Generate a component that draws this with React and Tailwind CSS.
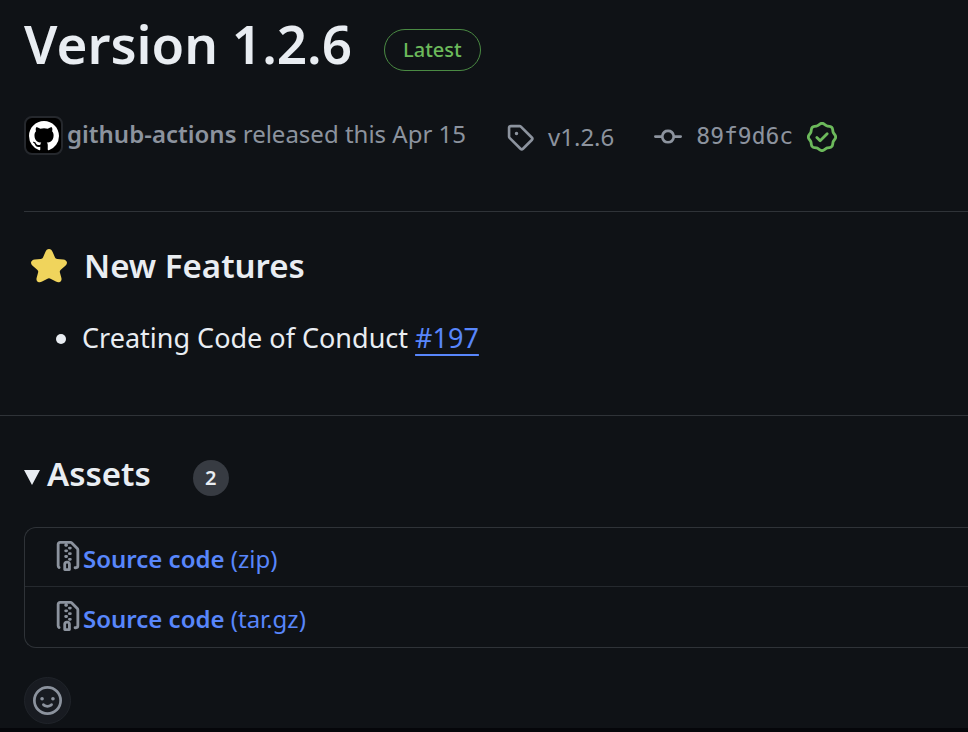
const ICONS = {
  github: "M8 0c4.42 0 8 3.58 8 8a8.013 8.013 0 0 1-5.45 7.59c-.4.08-.55-.17-.55-.38 0-.27.01-1.13.01-2.2 0-.75-.25-1.23-.54-1.48 1.78-.2 3.65-.88 3.65-3.95 0-.88-.31-1.59-.82-2.15.08-.2.36-1.02-.08-2.12 0 0-.67-.22-2.2.82-.64-.18-1.32-.27-2-.27-.68 0-1.36.09-2 .27-1.53-1.03-2.2-.82-2.2-.82-.44 1.1-.16 1.92-.08 2.12-.51.56-.82 1.28-.82 2.15 0 3.06 1.86 3.75 3.64 3.95-.23.2-.44.55-.51 1.07-.46.21-1.61.55-2.33-.66-.15-.24-.6-.83-1.23-.82-.67.01-.27.38.01.53.34.19.73.9.82 1.13.16.45.68 1.31 2.69.94 0 .67.01 1.3.01 1.49 0 .21-.15.45-.55.38A7.995 7.995 0 0 1 0 8c0-4.42 3.58-8 8-8Z",
  tag: "M1 7.775V2.75C1 1.784 1.784 1 2.75 1h5.025c.464 0 .91.184 1.238.513l6.25 6.25a1.75 1.75 0 0 1 0 2.474l-5.026 5.026a1.75 1.75 0 0 1-2.474 0l-6.25-6.25A1.752 1.752 0 0 1 1 7.775Zm1.5 0c0 .066.026.13.073.177l6.25 6.25a.25.25 0 0 0 .354 0l5.025-5.025a.25.25 0 0 0 0-.354l-6.25-6.25a.25.25 0 0 0-.177-.073H2.75a.25.25 0 0 0-.25.25ZM6 5a1 1 0 1 1 0 2 1 1 0 0 1 0-2Z",
  commit: "M11.93 8.5a4.002 4.002 0 0 1-7.86 0H.75a.75.75 0 0 1 0-1.5h3.32a4.002 4.002 0 0 1 7.86 0h3.32a.75.75 0 0 1 0 1.5Zm-1.43-.75a2.5 2.5 0 1 0-5 0 2.5 2.5 0 0 0 5 0Z",
  verified: "m9.585.52.929.68c.153.112.331.186.518.215l1.138.175a2.678 2.678 0 0 1 2.24 2.24l.174 1.139c.029.187.103.365.215.518l.68.928a2.677 2.677 0 0 1 0 3.17l-.68.928a1.174 1.174 0 0 0-.215.518l-.175 1.138a2.678 2.678 0 0 1-2.241 2.241l-1.138.175a1.17 1.17 0 0 0-.518.215l-.928.68a2.677 2.677 0 0 1-3.17 0l-.928-.68a1.174 1.174 0 0 0-.518-.215L3.83 14.41a2.678 2.678 0 0 1-2.24-2.24l-.175-1.138a1.17 1.17 0 0 0-.215-.518l-.68-.928a2.677 2.677 0 0 1 0-3.17l.68-.928c.112-.153.186-.331.215-.518l.175-1.14a2.678 2.678 0 0 1 2.24-2.24l1.139-.175c.187-.029.365-.103.518-.215l.928-.68a2.677 2.677 0 0 1 3.17 0ZM7.303 1.728l-.927.68a2.67 2.67 0 0 1-1.18.489l-1.137.174a1.179 1.179 0 0 0-.987.987l-.174 1.136a2.677 2.677 0 0 1-.489 1.18l-.68.928a1.18 1.18 0 0 0 0 1.394l.68.927c.256.348.424.753.489 1.18l.174 1.137c.078.509.478.909.987.987l1.136.174a2.67 2.67 0 0 1 1.18.489l.928.68c.414.305.979.305 1.394 0l.927-.68a2.67 2.67 0 0 1 1.18-.489l1.137-.174a1.18 1.18 0 0 0 .987-.987l.174-1.136a2.67 2.67 0 0 1 .489-1.18l.68-.928a1.176 1.176 0 0 0 0-1.394l-.68-.927a2.686 2.686 0 0 1-.489-1.18l-.174-1.137a1.179 1.179 0 0 0-.987-.987l-1.136-.174a2.677 2.677 0 0 1-1.18-.489l-.928-.68a1.176 1.176 0 0 0-1.394 0ZM11.28 6.78l-3.75 3.75a.75.75 0 0 1-1.06 0L4.72 8.78a.751.751 0 0 1 .018-1.042.751.751 0 0 1 1.042-.018L7 8.94l3.22-3.22a.751.751 0 0 1 1.042.018.751.751 0 0 1 .018 1.042Z",
  zip: "M3.5 1.75v11.5c0 .09.048.173.126.217a.75.75 0 0 1-.752 1.298A1.748 1.748 0 0 1 2 13.25V1.75C2 .784 2.784 0 3.75 0h5.586c.464 0 .909.185 1.237.513l2.914 2.914c.329.328.513.773.513 1.237v8.586A1.75 1.75 0 0 1 12.25 15h-.5a.75.75 0 0 1 0-1.5h.5a.25.25 0 0 0 .25-.25V4.664a.25.25 0 0 0-.073-.177L9.513 1.573a.25.25 0 0 0-.177-.073H7.25a.75.75 0 0 1 0 1.5h-.5a.75.75 0 0 1 0-1.5h-3a.25.25 0 0 0-.25.25Zm3.75 8.75h.5c.966 0 1.75.784 1.75 1.75v3a.75.75 0 0 1-.75.75h-2.5a.75.75 0 0 1-.75-.75v-3c0-.966.784-1.75 1.75-1.75ZM6 5.25a.75.75 0 0 1 .75-.75h.5a.75.75 0 0 1 0 1.5h-.5A.75.75 0 0 1 6 5.25Zm.75 2.25h.5a.75.75 0 0 1 0 1.5h-.5a.75.75 0 0 1 0-1.5ZM8 6.75A.75.75 0 0 1 8.75 6h.5a.75.75 0 0 1 0 1.5h-.5A.75.75 0 0 1 8 6.75ZM8.75 3h.5a.75.75 0 0 1 0 1.5h-.5a.75.75 0 0 1 0-1.5ZM8 9.75A.75.75 0 0 1 8.75 9h.5a.75.75 0 0 1 0 1.5h-.5A.75.75 0 0 1 8 9.75Zm-1 2.5v2.25h1v-2.25a.25.25 0 0 0-.25-.25h-.5a.25.25 0 0 0-.25.25Z",
  smiley: "M8 0a8 8 0 1 1 0 16A8 8 0 0 1 8 0ZM1.5 8a6.5 6.5 0 1 0 13 0 6.5 6.5 0 0 0-13 0Zm3.82 1.636a.75.75 0 0 1 1.038.175l.007.009c.103.118.22.222.35.31.264.178.683.37 1.285.37.602 0 1.02-.192 1.285-.371.13-.088.247-.192.35-.31l.007-.008a.75.75 0 0 1 1.222.87l-.614-.431c.614.43.614.431.613.431v.001l-.001.002-.002.003-.005.007-.014.019a2.066 2.066 0 0 1-.184.213c-.16.166-.338.316-.53.445-.63.418-1.37.638-2.127.629-.946 0-1.652-.308-2.126-.63a3.331 3.331 0 0 1-.715-.657l-.014-.02-.005-.006-.002-.003v-.002h-.001l.613-.432-.614.43a.75.75 0 0 1 .183-1.044ZM12 7a1 1 0 1 1-2 0 1 1 0 0 1 2 0ZM5 8a1 1 0 1 1 0-2 1 1 0 0 1 0 2Z",
};

function Icon({ name, className }) {
  return (
    <svg viewBox="0 0 16 16" fill="currentColor" aria-hidden="true" className={`shrink-0 ${className}`}>
      <path d={ICONS[name]} />
    </svg>
  );
}

const ASSETS = [
  { name: "Source code", format: "(zip)" },
  { name: "Source code", format: "(tar.gz)" },
];

export default function App() {
  return (
    <main className="min-h-screen overflow-hidden border-b-4 border-[#05060a] bg-[#0f1216] pb-1 font-['Noto_Sans',sans-serif] text-[#e9edf2]">
      <header className="ml-6 border-b border-[#2f3338] pb-14">
        <div className="flex items-center pt-2">
          <h1 className="text-[53px] leading-[72px] font-semibold">Version 1.2.6</h1>
          <span className="mt-3 ml-8 rounded-full border border-[#4a8a43] px-[18px] text-xl leading-10 font-medium text-[#6cb95b]">
            Latest
          </span>
        </div>
        <div className="mt-9 flex h-[39px] items-center text-2xl text-[#8c939e]">
          <span className="flex size-[39px] items-center justify-center rounded-lg border-2 border-[#25282d] bg-black text-white">
            <Icon name="github" className="size-[30px]" />
          </span>
          <p className="ml-1 pb-1">
            <a href="#author" className="font-semibold">github-actions</a> released this Apr 15
          </p>
          <a href="#tag" className="ml-10 flex items-center gap-3.5 pt-0.5">
            <Icon name="tag" className="size-7" />
            v1.2.6
          </a>
          <a href="#commit" className="ml-10 flex items-center gap-3.5 pt-0.5 font-['DejaVu_Sans_Mono',monospace] text-[23px]">
            <Icon name="commit" className="size-7" />
            89f9d6c
          </a>
          <Icon name="verified" className="mt-0.5 ml-3.5 size-[30px] text-[#6cb95b]" />
        </div>
      </header>

      <section className="border-b border-[#2f3338] pb-14 pl-6">
        <h2 className="mt-7 flex items-center text-[33px] leading-[52px] font-semibold">
          <svg viewBox="0 0 36 34" className="ml-[7px] h-[34px] w-9" aria-hidden="true">
            <path
              fill="#f0d45c"
              d="M18 0c1.700 0 2.900 1.100 3.600 2.900l2.300 5.300c.5 1.200 1.200 1.600 2.500 1.700l5.900.5c2 .2 3.300 1.300 3.600 2.800.3 1.500-.4 2.700-1.800 3.900l-4.300 3.600c-1 .9-1.200 1.600-.9 2.800l1.500 5.600c.4 1.600-.1 2.900-1.300 3.700-1.300.8-2.700.6-4.200-.3L20 29.900c-1.400-.8-2.600-.8-4 0l-4.900 2.600c-1.500.9-2.900 1.100-4.200.3-1.200-.8-1.700-2.100-1.300-3.700l1.500-5.600c.3-1.200.1-1.900-.9-2.800l-4.300-3.600C.5 15.900-.2 14.700.1 13.200c.3-1.500 1.600-2.600 3.600-2.800l5.900-.5c1.300-.1 2-.5 2.500-1.700l2.300-5.300C15.100 1.100 16.300 0 18 0z"
            />
          </svg>
          <span className="ml-[17px]">New Features</span>
        </h2>
        <ul className="mt-6 list-disc pl-[58px] text-[27px] leading-[43px]">
          <li>
            Creating Code of Conduct{" "}
            <a href="#197" className="text-[#5886fb] underline decoration-2 underline-offset-[6px]">#197</a>
          </li>
        </ul>
      </section>

      <section className="pt-8 pl-6">
        <h2 className="flex items-center text-[33px] leading-[52px] font-semibold">
          <button type="button" aria-expanded="true" className="flex items-center gap-[7px]">
            <svg viewBox="0 0 16 15" className="mt-1.5 h-[15px] w-4" fill="currentColor" aria-hidden="true">
              <path d="M0 0h16L8 15z" />
            </svg>
            Assets
          </button>
          <span className="mt-2 ml-[42px] size-9 rounded-full bg-[#373b42] text-center text-xl leading-9">2</span>
        </h2>
        <ul className="mt-[27px] rounded-l-xl border border-r-0 border-[#2f3338]">
          {ASSETS.map((asset) => (
            <li key={asset.format} className="flex h-[59px] items-center border-b border-[#25292e] pl-7 last:h-[60px] last:border-b-0">
              <Icon name="zip" className="mb-0.5 size-[30px] text-[#8c939e]" />
              <a href="#download" className="pt-1 text-2xl text-[#5886fb]">
                <span className="font-semibold">{asset.name}</span> {asset.format}
              </a>
            </li>
          ))}
        </ul>
        <button
          type="button"
          aria-label="Add a reaction"
          className="mt-[29px] flex size-[47px] items-center justify-center rounded-full border border-[#20242a] bg-[#181b21] text-[#8c939e]"
        >
          <Icon name="smiley" className="size-[29px]" />
        </button>
      </section>
    </main>
  );
}
